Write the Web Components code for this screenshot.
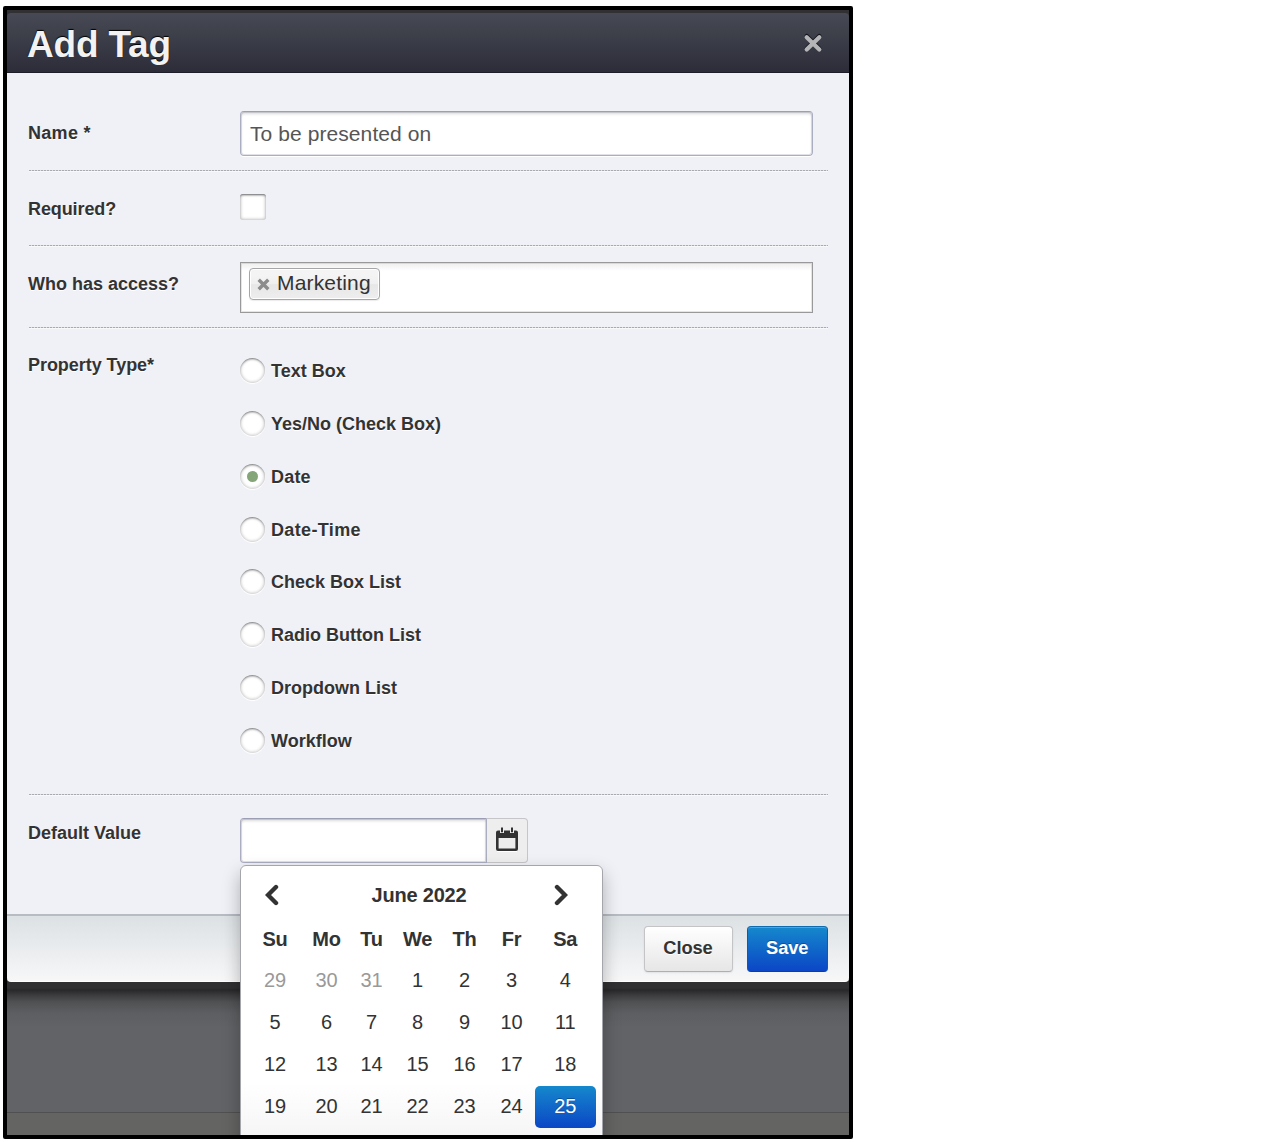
<!DOCTYPE html>
<html lang="en">
<head>
<meta charset="utf-8">
<title>Add Tag</title>
<style>
html,body{margin:0;background:#fff}
body{width:1264px;height:1142px;overflow:hidden;font-family:"Liberation Sans",Arial,sans-serif;color:#333}
</style>
</head>
<body>
<tag-dialog heading="Add Tag">
  <form-row label="Name *" style="height:99px;--label-top:50px;--field-top:38px;--label-spacing:.3px"><text-field value="To be presented on"></text-field></form-row>
  <form-row label="Required?" style="height:75px;--label-top:27px;--field-top:22px;--label-spacing:-.1px"><check-mark></check-mark></form-row>
  <form-row label="Who has access?" style="height:82px;--label-top:27px;--field-top:15px"><chip-field><tag-chip>Marketing</tag-chip></chip-field></form-row>
  <form-row label="Property Type*" style="height:467px;--label-top:26px;--field-top:16.5px;--label-spacing:-.05px">
    <radio-list>
      <radio-option>Text Box</radio-option>
      <radio-option>Yes/No (Check Box)</radio-option>
      <radio-option checked style="letter-spacing:.2px">Date</radio-option>
      <radio-option style="letter-spacing:.35px">Date-Time</radio-option>
      <radio-option>Check Box List</radio-option>
      <radio-option>Radio Button List</radio-option>
      <radio-option>Dropdown List</radio-option>
      <radio-option>Workflow</radio-option>
    </radio-list>
  </form-row>
  <form-row last label="Default Value" style="height:118px;--label-top:27px;--field-top:22px"><date-field><month-calendar></month-calendar></date-field></form-row>
  <push-button slot="footer">Close</push-button>
  <push-button slot="footer" primary>Save</push-button>
</tag-dialog>
<script>
class Base extends HTMLElement{
  constructor(){super();this.attachShadow({mode:'open'})}
  connectedCallback(){this.shadowRoot.innerHTML='<style>*{box-sizing:border-box}'+this.css()+'</style>'+this.html()}
  css(){return ''} html(){return '<slot></slot>'}
}
customElements.define('tag-dialog',class extends Base{
  css(){return `
  :host{display:block;box-sizing:border-box;width:850px;height:1133px;margin:6px 0 0 3px;border:4px solid #000;overflow:hidden;border-radius:2px;
    background:linear-gradient(#313133 0,#313133 20px,transparent 20px),
      linear-gradient(#303032 0,#303032 978px,#28282a 980px,#3b3b3d 985px,#505153 992px,#5d5e61 1003px,#626366 1018px,#626366 1102px,#505051 1102px,#505051 1103px,#646463 1103px)}
  .modal{margin-top:3px;height:969px;display:flex;flex-direction:column;border-radius:4px}
  header{height:60px;display:flex;align-items:center;justify-content:space-between;padding:0 26px 0 20px;border-radius:4px 4px 0 0;
    background:linear-gradient(#474a54,#2c2d38);border-bottom:1px solid #1d1e29}
  h1{margin:0;padding-top:3px;font-size:37px;line-height:57px;letter-spacing:-.2px;color:#f2f2f2;text-shadow:0 -1px 1px #000}
  main{flex:1;background:#f0f1f7;padding:0 20px 0 21px}
  footer{height:68px;display:flex;justify-content:flex-end;gap:14px;padding:10px 21px 0 0;border-top:2px solid #b7bbc2;border-radius:0 0 4px 4px;
    background:linear-gradient(#dce1e4,#f7f7f8);border-bottom:1px solid #fff}
  svg{display:block}`}
  html(){return `<div class="modal"><header><h1>${this.getAttribute('heading')}</h1>
  <svg width="20" height="20" viewBox="0 0 20 20" fill="none" stroke-linecap="round" stroke-width="4.200"><path d="M3.700 3 16.300 15.600M16.300 3 3.700 15.600" stroke="#14151c"/><path d="M3.700 4.200 16.300 16.600M16.300 4.200 3.700 16.600" stroke="#b4b5b7"/></svg></header>
  <main><slot></slot></main><footer><slot name="footer"></slot></footer></div>`}
});
customElements.define('form-row',class extends Base{
  css(){return `
  :host{box-sizing:border-box;display:flex;flex-direction:column;width:800px}
  .row{flex:1;min-height:0;display:grid;grid-template-columns:212px 573px}
  .label{font-weight:bold;font-size:18px;line-height:20px;letter-spacing:var(--label-spacing,0);padding-top:var(--label-top);text-shadow:0 1px 0 #fff}
  .field{padding-top:var(--field-top)}
  .line{height:2px;margin-left:1px;background:linear-gradient(#f9f9fc,#f9f9fc) 0 1px/100% 1px no-repeat,repeating-linear-gradient(90deg,#a9aaaf 0 2px,#dcdde2 2px 3px)}
  :host([last]) .line{display:none}`}
  html(){return `<div class="row"><div class="label">${this.getAttribute('label')}</div><div class="field"><slot></slot></div></div><div class="line"></div>`}
});
customElements.define('text-field',class extends Base{
  css(){return `:host{display:block;box-sizing:border-box;height:45px;border:1.5px solid #abaec1;border-top-color:#9c9eb3;border-radius:4px;background:#fff;box-shadow:inset 0 2px 3px rgba(0,0,0,.15),inset 0 0 0 1px rgba(160,163,185,.3),0 1px 0 #fff;padding-left:9px;font-size:21px;line-height:43px;letter-spacing:.08px;color:#555}`}
  html(){return `<span>${this.getAttribute('value')||''}</span>`}
});
customElements.define('check-mark',class extends Base{
  css(){return `:host{display:block;width:26px;height:26px;border-radius:3px;background:#fff;box-shadow:inset 0 2px 2px -1px #777,inset 0 0 3px 1px rgba(0,0,0,.24)}`}
  html(){return ''}
});
customElements.define('chip-field',class extends Base{
  css(){return `:host{display:block;box-sizing:border-box;height:51px;border:1px solid #999;outline:1px solid rgba(150,150,150,.25);outline-offset:-2px;background:linear-gradient(#eee 0,#fff 8px);padding:5px 8px}`}
});
customElements.define('tag-chip',class extends Base{
  css(){return `:host{display:inline-flex;box-sizing:border-box;height:32px;width:131px;align-items:center;border:1.5px solid #a6a6a6;border-radius:4px;padding:0 0 2px 7px;gap:7px;font-size:21px;line-height:28px;letter-spacing:.17px;
   background:linear-gradient(#f4f4f4 20%,#f0f0f0 50%,#e7e7e7 52%,#eee);box-shadow:inset 0 0 0 1px #fff,0 1px 1px rgba(0,0,0,.08)}
   svg{flex:none;margin-top:3px}`}
  html(){return `<svg width="13" height="13" viewBox="0 0 13 13" stroke="#8c8c8c" stroke-width="3.400"><path d="M1.700 1.700 11.300 11.300M11.300 1.700 1.700 11.300"/></svg><slot></slot>`}
});
customElements.define('radio-list',class extends Base{
  css(){return ':host{display:flex;flex-direction:column}'}
});
customElements.define('radio-option',class extends Base{
  css(){return `:host{display:flex;height:52.75px;align-items:center;gap:6px;font-weight:bold;font-size:18px;text-shadow:0 1px 0 #fff}
  i{width:25px;height:25px;margin-bottom:2px;border-radius:50%;display:grid;place-items:center;background:#fff;box-shadow:inset 0 2px 2px -1px rgba(0,0,0,.4),inset 0 0 3px 1px rgba(0,0,0,.22),0 1px 1px #fff}
  :host([checked]) i::after{content:"";width:11px;height:11px;border-radius:50%;background:#83a577}`}
  html(){return '<i></i><slot></slot>'}
});
customElements.define('date-field',class extends Base{
  css(){return `:host{display:flex;position:relative;width:288px;height:45px}
  .in{width:247px;border:1.5px solid #abaec1;border-top-color:#9c9eb3;border-radius:4px 0 0 4px;background:#fff;box-shadow:inset 0 2px 3px rgba(0,0,0,.15),inset 0 0 0 1px rgba(160,163,185,.3)}
  .btn{flex:1;border:1.5px solid #c6c6c8;border-left:0;border-radius:0 4px 4px 0;background:#eee;display:grid;place-items:center;padding:0 1px 3px 0}
  .pop{position:absolute;left:0;top:47px;z-index:2}`}
  html(){return `<div class="in"></div><div class="btn"><svg width="24" height="26" viewBox="0 0 24 26"><path fill="#fff" d="M2 24h20v2H2Z"/><path fill="#333" fill-rule="evenodd" d="M3 4.500h18q2 0 2 2V23q0 2-2 2H3q-2 0-2-2V6.500q0-2 2-2ZM3.600 12v10.400h16.800V12Z"/><path stroke="#eee" stroke-width="4" d="M7 1v6M17 1v6"/><path stroke="#333" stroke-width="2" d="M7 1.500v4.700M17 1.500v4.700"/></svg></div><div class="pop"><slot></slot></div>`}
});
customElements.define('month-calendar',class extends Base{
  css(){return `:host{display:block;box-sizing:border-box;width:363px;height:330px;border:1px solid #a5a6ac;border-radius:6px;background:linear-gradient(#fff 66%,#f2f2f2 88%);box-shadow:0 8px 18px rgba(0,0,0,.28);padding:7px 6px 0 5px;font-size:20px}
  .top{display:grid;grid-template-columns:14px 1fr 14px;align-items:center;justify-items:center;height:44px;padding:0 28px 0 19px}
  .top b{padding-left:5px}
  b{letter-spacing:-.2px}
  .grid{display:grid;grid-template-columns:58px 45px 45px 47px 47px 47px 60.5px;grid-auto-rows:42.2px;text-align:center}
  .grid>*{display:grid;place-items:center;letter-spacing:-.2px}
  .grid>b{padding-top:2px}
  .old{color:#999}
  .sel{background:linear-gradient(#1588cc,#0b46c6);color:#fff;border-radius:5px;text-shadow:0 -1px 0 rgba(0,0,0,.3)}`}
  html(){
    const d='Su Mo Tu We Th Fr Sa'.split(' ').map(x=>`<b>${x}</b>`).join('');
    let n='';for(const x of [29,30,31])n+=`<span class="old">${x}</span>`;
    for(let x=1;x<26;x++)n+=`<span${x==25?' class="sel"':''}>${x}</span>`;
    const c=p=>`<svg width="14" height="22" viewBox="0 0 14 22" fill="none" stroke="#333" stroke-width="4.400" stroke-linecap="round"><path d="${p}"/></svg>`;
    return `<div class="top">${c('M11 3 3 11 11 19')}<b>June 2022</b>${c('M3 3 11 11 3 19')}</div><div class="grid">${d}${n}</div>`}
});
customElements.define('push-button',class extends Base{
  css(){return `:host{box-sizing:border-box;display:grid;place-items:center;width:89px;height:45.5px;padding-bottom:1px;border:1.5px solid #c4c4c6;border-bottom-color:#afafb1;border-radius:4px;background:linear-gradient(#fff,#e6e6e6);font-weight:bold;font-size:18.3px;letter-spacing:-.1px;text-shadow:0 1px 0 #fff;box-shadow:0 1px 2px rgba(0,0,0,.08)}
  :host([primary]){width:81.5px;color:#fff;border-color:#0f6bae #1157b5 #0b3da8;background:linear-gradient(#1588cc,#0b46c6);text-shadow:0 -1px 0 rgba(0,0,0,.3);box-shadow:inset 0 1px 0 rgba(255,255,255,.25)}`}
});
</script>
</body>
</html>
